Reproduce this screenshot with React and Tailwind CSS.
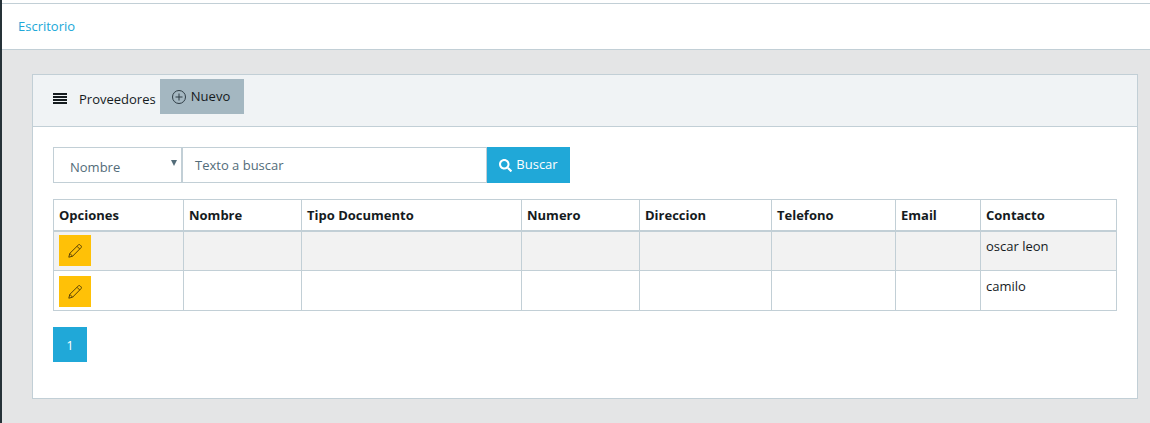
import { FaSearch } from 'react-icons/fa';

const columnas = [
  { nombre: 'Opciones', ancho: 'w-[130px]' },
  { nombre: 'Nombre', ancho: 'w-[118px]' },
  { nombre: 'Tipo Documento', ancho: 'w-[220px]' },
  { nombre: 'Numero', ancho: 'w-[118px]' },
  { nombre: 'Direccion', ancho: 'w-[132px]' },
  { nombre: 'Telefono', ancho: 'w-[124px]' },
  { nombre: 'Email', ancho: 'w-[85px]' },
  { nombre: 'Contacto', ancho: 'w-[136px]' },
];

const proveedores = [
  { id: 1, contacto: 'oscar leon' },
  { id: 2, contacto: 'camilo' },
];

function IconoBarras() {
  return (
    <svg width="14" height="11" viewBox="0 0 14 11" fill="#151b1e">
      <path d="M0 0h14v2H0zM0 3h14v2H0zM0 6h14v2H0zM0 9h14v2H0z" />
    </svg>
  );
}

function IconoLapiz() {
  return (
    <svg width="14" height="14" viewBox="0 0 14 14" fill="none" stroke="#5a4308" strokeWidth="1">
      <path d="M.8 13.2l1-3.8L10.4.9a1.2 1.2 0 0 1 1.7 0l1 1a1.2 1.2 0 0 1 0 1.7L4.6 12.2z" />
      <path d="M1.8 9.4l2.8 2.8M9 2.3l2.8 2.8" />
    </svg>
  );
}

function IconoMas() {
  return (
    <svg width="14" height="14" viewBox="0 0 14 14" fill="none" stroke="#2f3d45" strokeWidth="1">
      <circle cx="7" cy="7" r="6.5" />
      <path d="M7 3.5v7M3.5 7h7" />
    </svg>
  );
}

export default function App() {
  return (
    <div className="min-h-[423px] bg-[#e4e5e6] border-l-2 border-[#263238] font-['Open_Sans',sans-serif] text-[14px] text-[#151b1e]">
      <div className="pt-[3px] bg-white">
        <div className="h-[47px] border-t border-b border-[#c2cfd6] flex items-center pl-4 text-[13px] text-[#20a8d8]">
          Escritorio
        </div>
      </div>

      <div className="pt-6 pl-[30px] pr-3">
        <div className="bg-white border border-[#c2cfd6] h-[325px]">
          <div className="h-[52px] bg-[#f0f3f5] border-b border-[#c2cfd6] flex items-start pl-5">
            <span className="mt-[18px]">
              <IconoBarras />
            </span>
            <span className="ml-3 mt-[15px] text-[13px]">Proveedores</span>
            <button className="ml-1 mt-1 w-[84px] h-[35px] bg-[#a4b7c1] flex items-center pl-3 gap-[5px] text-[13px] tracking-[0.1px]">
              <IconoMas />
              Nuevo
            </button>
          </div>

          <div className="pt-5 px-5">
            <div className="flex h-9">
              <div className="w-[129px] border border-[#c2cfd6] relative pl-4 flex items-center pt-[6px] text-[13px] text-[#536c79]">
                Nombre
                <span className="absolute right-1 top-[12px] border-x-[3px] border-t-[6px] border-x-transparent border-t-[#536c79]" />
              </div>
              <div className="w-[305px] border border-[#c2cfd6] pl-[12px] pt-[2px] flex items-center text-[13px] text-[#536c79]">
                Texto a buscar
              </div>
              <button className="w-[83px] bg-[#20a8d8] text-white text-[13px] flex items-center justify-center gap-1">
                <FaSearch className="w-[13px] h-[13px]" />
                Buscar
              </button>
            </div>

            <table className="mt-4 w-[1063px] table-fixed border-collapse">
              <thead>
                <tr className="h-[31px]">
                  {columnas.map((col) => (
                    <th
                      key={col.nombre}
                      className={`${col.ancho} border border-b-2 border-[#c2cfd6] px-[5px] pt-[2px] text-left text-[13px] font-bold`}
                    >
                      {col.nombre}
                    </th>
                  ))}
                </tr>
              </thead>
              <tbody>
                {proveedores.map((p, i) => (
                  <tr key={p.id} className={i % 2 === 0 ? 'h-10 bg-[#f2f2f2]' : 'h-10 bg-white'}>
                    <td className={`border border-[#c2cfd6] px-[5px] align-middle ${i === 1 ? 'pt-[2px]' : ''}`}>
                      <button className="w-8 h-[31px] bg-[#ffc107] flex items-center justify-center">
                        <IconoLapiz />
                      </button>
                    </td>
                    <td className="border border-[#c2cfd6]" />
                    <td className="border border-[#c2cfd6]" />
                    <td className="border border-[#c2cfd6]" />
                    <td className="border border-[#c2cfd6]" />
                    <td className="border border-[#c2cfd6]" />
                    <td className="border border-[#c2cfd6]" />
                    <td className={`border border-[#c2cfd6] px-[5px] align-top text-[13px] ${i === 1 ? 'pt-[6px]' : 'pt-[5px]'}`}>{p.contacto}</td>
                  </tr>
                ))}
              </tbody>
            </table>

            <button className="mt-4 w-[34px] h-[35px] pt-[2px] bg-[#20a8d8] text-white text-[13px]">1</button>
          </div>
        </div>
      </div>
    </div>
  );
}
